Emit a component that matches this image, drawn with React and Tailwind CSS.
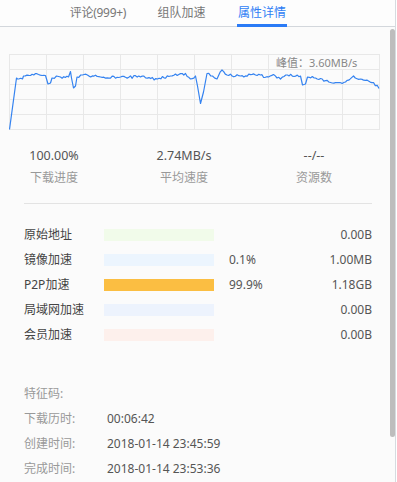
import React from "react";

const keys = [
  [9,129.5],[16,78],[17,79],[22,79],[23,76],[30,75.5],[38,74.5],[45,75.5],[47.5,84],[50,83],[51.5,78],[56,76],[60,77],[68,77],[70,71.5],[71,78],[73,88],[75,86],[76.5,77],[82,75],[100,77],[120,77],[140,77],[157,79],[170,76],[185,73.5],[190,79],[195,76],[197,86],[200,103.5],[203,92],[206.5,73.5],[212,76],[216.5,79],[221.5,70],[226.5,75],[240,76],[255,75],[268,77],[273,74.5],[280,79],[287,75],[300,76],[302,85],[305,84],[307,77],[315,78],[330,82.5],[345,82],[353,76],[360,79],[368,81],[373,82.5],[378.5,88.5]
];

function buildPoints() {
  const pts = [];
  for (let i = 0; i < keys.length - 1; i++) {
    const [x0, y0] = keys[i];
    const [x1, y1] = keys[i + 1];
    pts.push([x0, y0]);
    const span = x1 - x0;
    if (span > 4 && i > 0) {
      const n = Math.floor(span / 1.6);
      for (let k = 1; k < n; k++) {
        const t = k / n;
        const x = x0 + span * t;
        const h = Math.sin(x * 12.9898 + 78.233) * 43758.5453;
        const r = h - Math.floor(h);
        const y = y0 + (y1 - y0) * t + (r - 0.5) * 2.6;
        pts.push([x, y]);
      }
    }
  }
  pts.push(keys[keys.length - 1]);
  return pts.map(([x, y]) => `${(x - 9 + 0.5).toFixed(1)},${(y - 54).toFixed(1)}`).join(" ");
}

const linePoints = buildPoints();

function Chart() {
  const vs = Array.from({ length: 11 }, (_, i) => 0.5 + i * 37);
  const hs = Array.from({ length: 6 }, (_, j) => 0.5 + j * 15);
  return (
    <div className="relative ml-[9px] mt-[27px] h-[76px] w-[371px]">
      <svg width="371" height="76" className="block">
        {vs.map((x) => (
          <line key={"v" + x} x1={x} y1="0" x2={x} y2="76" stroke="#e8e8e8" strokeWidth="1" />
        ))}
        {hs.map((y) => (
          <line key={"h" + y} x1="0" y1={y} x2="371" y2={y} stroke="#e8e8e8" strokeWidth="1" />
        ))}
        <polyline points={linePoints} fill="none" stroke="#3583f0" strokeWidth="1.2" strokeLinejoin="round" />
      </svg>
      <div className="absolute left-[263px] top-[1px] flex h-[14px] w-[107px] items-center bg-[#fbfbfb] pl-[4px] text-[11px] leading-none text-[#888]">
        峰值：3.60MB/s
      </div>
    </div>
  );
}

const bars = [
  { label: "原始地址", color: "bg-[#f1fbea]", pct: "", val: "0.00B" },
  { label: "镜像加速", color: "bg-[#ecf5fe]", pct: "0.1%", val: "1.00MB" },
  { label: "P2P加速", color: "bg-[#fbbe42]", pct: "99.9%", val: "1.18GB" },
  { label: "局域网加速", color: "bg-[#edf3fd]", pct: "", val: "0.00B" },
  { label: "会员加速", color: "bg-[#fdf0ec]", pct: "", val: "0.00B" },
];

const info = [
  { label: "特征码:", val: "" },
  { label: "下载历时:", val: "00:06:42" },
  { label: "创建时间:", val: "2018-01-14 23:45:59" },
  { label: "完成时间:", val: "2018-01-14 23:53:36" },
];

export default function App() {
  return (
    <div
      className="h-[482px] w-[396px] overflow-hidden border-r border-[#d6dbe0] bg-[#fbfbfb] text-[12px]"
      style={{ fontFamily: "'Noto Sans', 'Noto Sans CJK SC', sans-serif" }}
    >
      <div className="flex h-[27px] border-b border-[#d3d7dc] bg-[#fdfdfd] pl-[66px]">
        <div className="flex h-full w-[64px] items-center justify-center whitespace-nowrap text-[12px] leading-none tracking-[-0.3px] text-[#777]">评论(999+)</div>
        <div className="flex h-full w-[103px] items-center justify-center text-[12px] leading-none text-[#777]">组队加速</div>
        <div className="relative flex h-full w-[58px] items-center justify-center text-[12px] leading-none text-[#2f7df5]">
          属性详情
          <div className="absolute bottom-[-1px] left-[4px] h-[3px] w-[50px] bg-[#2b7bf6]" />
        </div>
      </div>
      <div className="flex">
        <div className="w-[390px]">
          <Chart />
          <div className="mt-[17px] flex gap-[50px] pl-[14px]">
            {[
              ["100.00%", "下载进度"],
              ["2.74MB/s", "平均速度"],
              ["--/--", "资源数"],
            ].map(([v, l]) => (
              <div key={l} className="flex w-[80px] flex-col items-center">
                <div className="h-[18px] text-[12.5px] leading-[18px] text-[#555]">{v}</div>
                <div className="mt-[4px] h-[18px] text-[12px] leading-[18px] text-[#999]">{l}</div>
              </div>
            ))}
          </div>
          <div className="ml-[24px] mt-[16px] h-px w-[348px] bg-[#e3e3e3]" />
          <div className="mt-[18px] flex flex-col">
            {bars.map((b) => (
              <div key={b.label} className="flex h-[25px] items-center pl-[24px]">
                <div className="w-[80px] text-[12px] text-[#444]">{b.label}</div>
                <div className={`h-[12px] w-[110px] ${b.color}`} />
                <div className="ml-[15px] w-[60px] text-[12px] text-[#555]">{b.pct}</div>
                <div className="w-[83px] text-right text-[12px] text-[#555]">{b.val}</div>
              </div>
            ))}
          </div>
          <div className="mt-[34px] flex flex-col">
            {info.map((r) => (
              <div key={r.label} className="flex h-[25px] items-center pl-[24px]">
                <div className="w-[83px] text-[12px] text-[#999]">{r.label}</div>
                <div className="text-[12px] text-[#555]">{r.val}</div>
              </div>
            ))}
          </div>
        </div>
        <div className="w-[5px] pt-[2px]">
          <div className="h-[408px] w-[5px] rounded-[3px] bg-[#bdbdbd]" />
        </div>
      </div>
    </div>
  );
}
